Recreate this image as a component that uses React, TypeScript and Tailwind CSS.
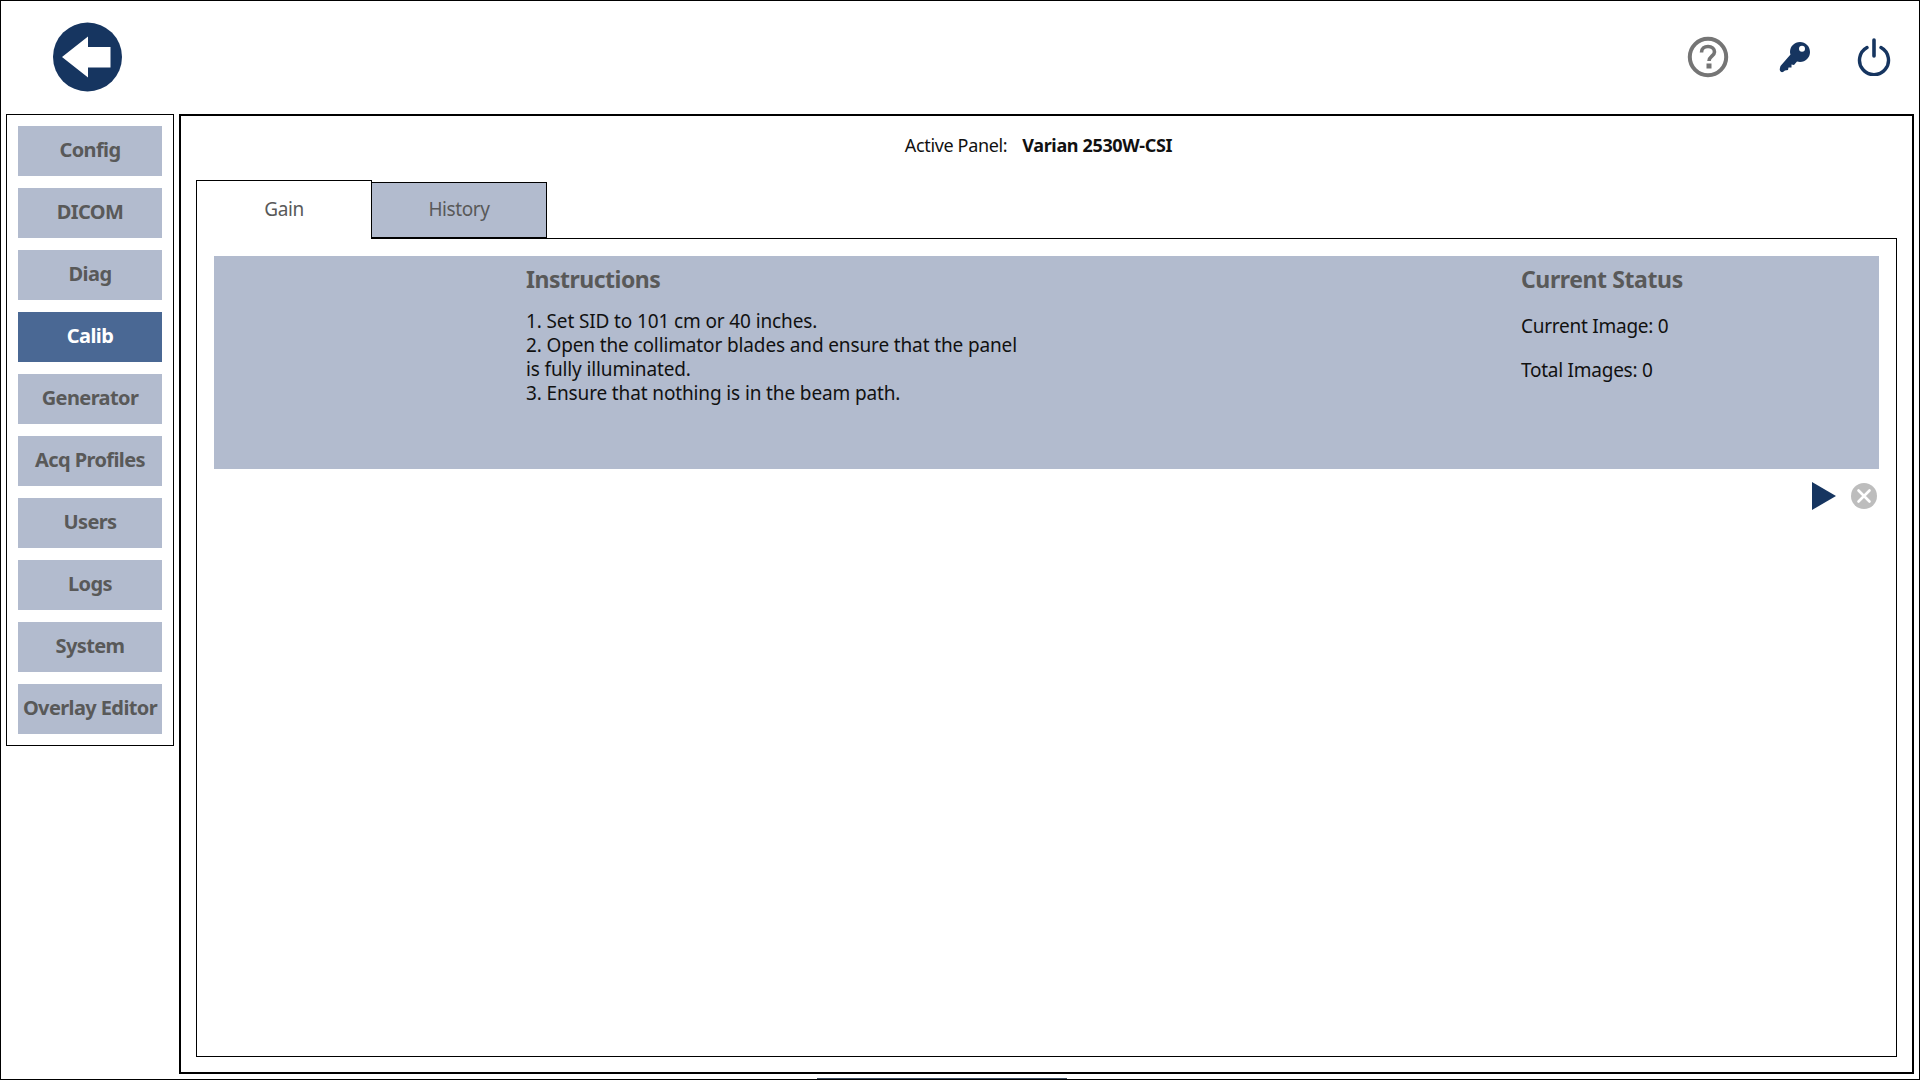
import React from 'react';

const navItems = ['Config', 'DICOM', 'Diag', 'Calib', 'Generator', 'Acq Profiles', 'Users', 'Logs', 'System', 'Overlay Editor'];

const BackIcon = () => (
  <svg width="70" height="70" viewBox="0 0 70 70">
    <circle cx="34.5" cy="35" r="34.5" fill="#163560" />
    <path d="M9 35 L35 14.5 V25 H57.5 V45.5 H35 V55.5 Z" fill="#fff" />
  </svg>
);

const HelpIcon = () => (
  <svg width="42" height="42" viewBox="0 0 42 42">
    <circle cx="21" cy="21" r="18.2" fill="none" stroke="#757575" strokeWidth="4" />
    <path d="M14.5 16.5 C14.5 12.5 17.5 10.5 21 10.5 C25 10.5 27.5 13 27.5 16 C27.5 20 22 20.5 22 25" fill="none" stroke="#757575" strokeWidth="3.6" />
    <rect x="19.5" y="27.5" width="5" height="5" fill="#757575" />
  </svg>
);

const KeyIcon = () => (
  <svg width="32" height="32" viewBox="0 0 32 32">
    <path
      fillRule="evenodd"
      d="M21 1 C26.6 1 31 5.4 31 11 C31 16.6 26.6 21 21 21 C20 21 19 20.9 18 20.6 L15 24 L12.5 23.5 L12.5 26.5 L9.5 26.5 L9 29 L6 29.5 L4 31 C2.5 31.5 1 30.5 0.8 29 C0.6 28 1 27 1.5 25 L11.5 13.5 C11.2 12.7 11 11.9 11 11 C11 5.4 15.4 1 21 1 Z M23 4.8 A3 3 0 1 0 23 10.8 A3 3 0 1 0 23 4.8 Z"
      fill="#163560"
    />
  </svg>
);

const PowerIcon = () => (
  <svg width="34" height="38" viewBox="0 0 34 38">
    <path d="M10 9.5 A14.5 14.5 0 1 0 24 9.5" fill="none" stroke="#163560" strokeWidth="3.4" strokeLinecap="round" />
    <line x1="17" y1="2" x2="17" y2="18" stroke="#163560" strokeWidth="3.6" strokeLinecap="round" />
  </svg>
);

const PlayIcon = () => (
  <svg width="24" height="28" viewBox="0 0 24 28">
    <path d="M0 0 L24 14 L0 28 Z" fill="#163560" />
  </svg>
);

const CancelIcon = () => (
  <svg width="26" height="26" viewBox="0 0 26 26">
    <circle cx="13" cy="13" r="13" fill="#bdbdbd" />
    <path d="M7.5 7.5 L18.5 18.5 M18.5 7.5 L7.5 18.5" stroke="#fff" strokeWidth="2.6" strokeLinecap="round" />
  </svg>
);

export default function App() {
  return (
    <div className="relative w-[1920px] h-[1080px] overflow-hidden bg-white border border-black font-['Noto_Sans',sans-serif]">
      <div className="flex items-center h-[113px] pb-[1px] pl-[52px] pr-[28px]">
        <BackIcon />
        <div className="ml-auto flex items-center">
          <HelpIcon />
          <div className="ml-[50px]"><KeyIcon /></div>
          <div className="ml-[46px]"><PowerIcon /></div>
        </div>
      </div>

      <div className="flex items-start pl-[5px]">
        <nav className="flex flex-col gap-[12px] w-[168px] border border-black pt-[11px] pb-[11px] pl-[11px]">
          {navItems.map((item) => (
            <button
              key={item}
              className={
                item === 'Calib'
                  ? 'w-[144px] h-[50px] pb-[2px] bg-[#4a6894] text-white text-[20px] font-bold tracking-[-0.6px] whitespace-nowrap'
                  : 'w-[144px] h-[50px] pb-[2px] bg-[#b2bbce] text-[#595959] text-[20px] font-bold tracking-[-0.6px] whitespace-nowrap'
              }
            >
              {item}
            </button>
          ))}
        </nav>

        <main className="flex flex-col w-[1735px] h-[960px] ml-[5px] border-2 border-black pl-[15px] pr-[15px] pb-[15px]">
          <div className="flex justify-center h-[64px] pt-[16px] pr-[16px] text-[18px] text-[#111] tracking-[-0.35px]">
            <span>Active Panel:</span>
            <span className="ml-[15px] font-bold">Varian 2530W-CSI</span>
          </div>

          <div className="flex items-end h-[58px]">
            <div className="flex items-center justify-center w-[176px] h-[59px] pb-[1px] -mb-px z-10 bg-white border border-black border-b-0 text-[19px] text-[#595959] tracking-[-0.4px]">
              Gain
            </div>
            <div className="flex items-center justify-center w-[176px] h-[57px] pb-[1px] -ml-px -mb-px z-10 bg-[#b2bbce] border border-black border-b-2 text-[19px] text-[#595959] tracking-[-0.4px]">
              History
            </div>
          </div>

          <div className="flex-1 border border-black pt-[17px] pl-[17px] pr-[17px]">
            <div className="flex h-[213px] bg-[#b2bbce]">
              <div className="w-[311px]" />
              <div className="w-[995px] pt-[9px] pl-[1px]">
                <h2 className="text-[23px] font-bold text-[#595959] tracking-[-0.5px] leading-[29px]">Instructions</h2>
                <p className="mt-[15px] w-[520px] text-[19px] leading-[24px] text-[#111] tracking-[-0.13px]">
                  1. Set SID to 101 cm or 40 inches.
                  <br />
                  2. Open the collimator blades and ensure that the panel
                  <br />
                  is fully illuminated.
                  <br />
                  3. Ensure that nothing is in the beam path.
                </p>
              </div>
              <div className="pt-[9px] pl-[1px]">
                <h2 className="text-[23px] font-bold text-[#595959] tracking-[-0.4px] leading-[29px]">Current Status</h2>
                <p className="mt-[20px] text-[19px] leading-[24px] text-[#111] tracking-[-0.25px]">Current Image: 0</p>
                <p className="mt-[20px] text-[19px] leading-[24px] text-[#111] tracking-[-0.25px]">Total Images: 0</p>
              </div>
            </div>
            <div className="flex justify-end items-start gap-[15px] pt-[13px] pr-[2px]">
              <PlayIcon />
              <div className="mt-[1px]"><CancelIcon /></div>
            </div>
          </div>
        </main>
      </div>

      <div className="absolute bottom-0 left-[816px] w-[250px] h-px bg-[#3a4a5c]" />
    </div>
  );
}
